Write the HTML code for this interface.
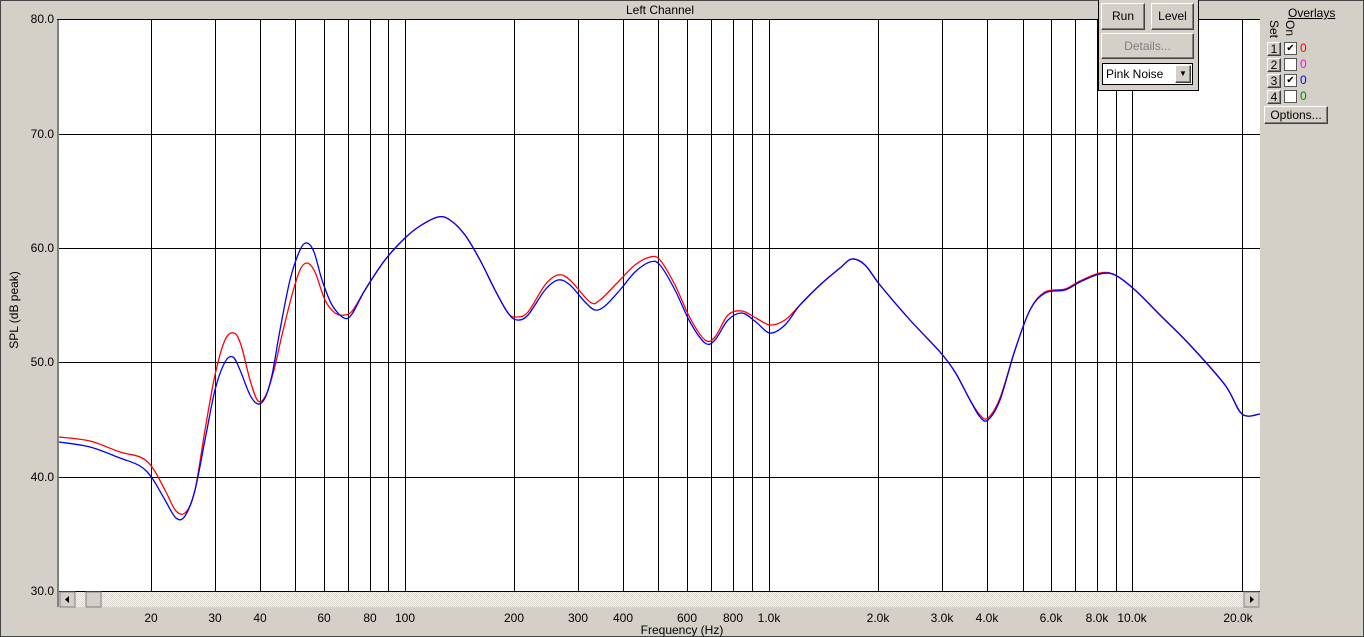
<!DOCTYPE html><html><head><style>
body{margin:0;width:1364px;height:637px;overflow:hidden;background:#d4d0c8;font-family:"Liberation Sans",Arial,sans-serif;font-size:12px;color:#000}
.btn{position:absolute;background:#d4d0c8;border:1px solid;border-color:#fff #404040 #404040 #fff;box-shadow:inset -1px -1px 0 #808080;text-align:center;font-size:12px}
</style></head><body>
<div style="position:absolute;left:0;top:0;width:1362px;height:635px;border:1px solid #444"></div>
<svg width="1364" height="637" style="position:absolute;left:0;top:0" font-family="Liberation Sans, Arial, sans-serif" font-size="12">
<rect x="59" y="19" width="1201" height="572" fill="#fff"/>
<line x1="58" y1="19" x2="58" y2="607" stroke="#808080" stroke-width="2"/>
<line x1="57" y1="19.5" x2="1260" y2="19.5" stroke="#000"/>
<g stroke="#000" stroke-width="1">
<line x1="59" y1="134.5" x2="1260" y2="134.5"/><line x1="59" y1="248.5" x2="1260" y2="248.5"/><line x1="59" y1="362.5" x2="1260" y2="362.5"/><line x1="59" y1="477.5" x2="1260" y2="477.5"/>
<line x1="151.5" y1="19" x2="151.5" y2="591"/><line x1="215.5" y1="19" x2="215.5" y2="591"/><line x1="260.5" y1="19" x2="260.5" y2="591"/><line x1="295.5" y1="19" x2="295.5" y2="591"/><line x1="324.5" y1="19" x2="324.5" y2="591"/><line x1="348.5" y1="19" x2="348.5" y2="591"/><line x1="370.5" y1="19" x2="370.5" y2="591"/><line x1="388.5" y1="19" x2="388.5" y2="591"/><line x1="405.5" y1="19" x2="405.5" y2="591"/>
<line x1="514.5" y1="19" x2="514.5" y2="591"/><line x1="578.5" y1="19" x2="578.5" y2="591"/><line x1="623.5" y1="19" x2="623.5" y2="591"/><line x1="658.5" y1="19" x2="658.5" y2="591"/><line x1="687.5" y1="19" x2="687.5" y2="591"/><line x1="711.5" y1="19" x2="711.5" y2="591"/><line x1="733.5" y1="19" x2="733.5" y2="591"/><line x1="752.5" y1="19" x2="752.5" y2="591"/><line x1="769.5" y1="19" x2="769.5" y2="591"/>
<line x1="878.5" y1="19" x2="878.5" y2="591"/><line x1="942.5" y1="19" x2="942.5" y2="591"/><line x1="987.5" y1="19" x2="987.5" y2="591"/><line x1="1023.5" y1="19" x2="1023.5" y2="591"/><line x1="1051.5" y1="19" x2="1051.5" y2="591"/><line x1="1075.5" y1="19" x2="1075.5" y2="591"/><line x1="1097.5" y1="19" x2="1097.5" y2="591"/><line x1="1116.5" y1="19" x2="1116.5" y2="591"/><line x1="1132.5" y1="19" x2="1132.5" y2="591"/><line x1="1242.5" y1="19" x2="1242.5" y2="591"/>
</g>
<polyline class="c" fill="none" stroke="#f00" stroke-width="1.3" stroke-linejoin="round" points="59,437 90,441 120,452 140,457 152,467 165,490 176,511 186,512 195,490 205,430 215,375 225,340 234,333 241,345 250,380 258,401 266,395 274,370 282,335 292,295 300,270 307,263 315,272 325,300 335,313 345,315 353,310 365,290 385,260 405,238 420,226 438,217 450,220 465,235 480,260 495,290 508,313 517,317 528,312 545,285 558,275 570,280 590,302 600,300 620,280 635,265 650,257 660,260 675,285 690,318 705,340 715,337 728,315 742,311 756,318 770,325 785,320 800,305 820,285 840,268 852,259 865,265 880,285 910,320 940,352 955,372 970,400 980,415 988,418 1000,398 1015,350 1030,310 1045,292 1065,289 1080,281 1100,273 1115,275 1135,290 1160,315 1190,345 1225,385 1242,414 1260,414"/>
<polyline class="c" fill="none" stroke="#00f" stroke-width="1.3" stroke-linejoin="round" points="59,442 90,447 120,458 140,466 152,478 165,500 176,518 185,516 195,490 205,440 215,390 225,362 233,357 240,370 250,395 258,404 265,398 272,375 280,330 290,280 300,250 307,243 314,252 322,280 332,305 344,318 352,314 365,290 385,260 405,238 420,226 438,217 450,220 465,235 480,260 495,290 508,313 517,320 528,315 545,290 558,280 570,285 585,302 595,310 605,306 620,290 635,272 650,262 660,265 675,290 690,322 705,343 715,340 728,320 742,313 756,322 770,333 785,325 800,305 820,285 840,268 852,259 865,265 880,285 910,320 940,352 955,372 970,400 980,417 988,420 1000,400 1015,350 1030,310 1045,293 1065,290 1080,282 1100,274 1115,275 1135,290 1160,315 1190,345 1225,385 1242,414 1260,414"/>
<g text-anchor="end" fill="#000"><text x="54" y="23">80.0</text><text x="54" y="138">70.0</text><text x="54" y="252">60.0</text><text x="54" y="366">50.0</text><text x="54" y="481">40.0</text><text x="54" y="595">30.0</text></g>
<text x="18" y="310" transform="rotate(-90 18 310)" text-anchor="middle">SPL (dB peak)</text>
<text x="660" y="14" text-anchor="middle">Left Channel</text>
<g text-anchor="middle"><text x="151" y="622">20</text><text x="215" y="622">30</text><text x="260" y="622">40</text><text x="324" y="622">60</text><text x="370" y="622">80</text><text x="405" y="622">100</text><text x="514" y="622">200</text><text x="578" y="622">300</text><text x="623" y="622">400</text><text x="687" y="622">600</text><text x="733" y="622">800</text><text x="769" y="622">1.0k</text><text x="878" y="622">2.0k</text><text x="942" y="622">3.0k</text><text x="987" y="622">4.0k</text><text x="1051" y="622">6.0k</text><text x="1097" y="622">8.0k</text><text x="1132" y="622">10.0k</text><text x="1238" y="622">20.0k</text><text x="682" y="634">Frequency (Hz)</text></g>
<defs><pattern id="p" width="2" height="2" patternUnits="userSpaceOnUse"><rect width="2" height="2" fill="#fff"/><rect width="1" height="1" fill="#d4d0c8"/><rect x="1" y="1" width="1" height="1" fill="#d4d0c8"/></pattern></defs>
<rect x="59" y="591" width="1201" height="16" fill="url(#p)"/>
<line x1="59" y1="591.5" x2="1260" y2="591.5" stroke="#000"/>
<rect x="60" y="592" width="15" height="15" fill="#d4d0c8" stroke="#808080"/><path d="M69 596v7l-4-3.5z" fill="#000"/>
<rect x="86" y="592" width="15" height="15" fill="#d4d0c8" stroke="#808080"/>
<rect x="1244" y="592" width="15" height="15" fill="#d4d0c8" stroke="#808080"/><path d="M1250 596v7l4-3.5z" fill="#000"/>
</svg>
<script>
document.querySelectorAll('polyline.c').forEach(function(pl){
var p=pl.getAttribute('points').trim().split(/\s+/).map(function(s){return s.split(',').map(Number);});
var d='M'+p[0][0]+' '+p[0][1];
for(var i=0;i<p.length-1;i++){var a=p[Math.max(0,i-1)],b=p[i],c=p[i+1],e=p[Math.min(p.length-1,i+2)];
var t=6;d+=' C'+(b[0]+(c[0]-a[0])/t)+' '+(b[1]+(c[1]-a[1])/t)+' '+(c[0]-(e[0]-b[0])/t)+' '+(c[1]-(e[1]-b[1])/t)+' '+c[0]+' '+c[1];}
var path=document.createElementNS('http://www.w3.org/2000/svg','path');
path.setAttribute('d',d);path.setAttribute('fill','none');path.setAttribute('stroke',pl.getAttribute('stroke'));path.setAttribute('stroke-width','1.3');
pl.parentNode.replaceChild(path,pl);});
</script>
<div style="position:absolute;left:1098px;top:0;width:99px;height:90px;background:#d4d0c8;border:1px solid #000;border-top:none"></div>
<div class="btn" style="left:1101px;top:3px;width:42px;height:25px;line-height:25px">Run</div>
<div class="btn" style="left:1151px;top:3px;width:41px;height:25px;line-height:25px">Level</div>
<div class="btn" style="left:1101px;top:33px;width:91px;height:24px;line-height:24px;color:#808080">Details...</div>
<div style="position:absolute;left:1102px;top:63px;background:#fff;border:1px solid #000;line-height:20px;padding-left:3px;box-sizing:border-box;width:91px;height:22px">Pink Noise</div>
<div class="btn" style="left:1175px;top:65px;width:14px;height:16px;font-size:8px;line-height:16px">▼</div>
<div style="position:absolute;left:1288px;top:6px;text-decoration:underline">Overlays</div>
<div style="position:absolute;top:20px;transform:rotate(90deg);transform-origin:left top;left:1281px;font-size:12px">Set</div>
<div style="position:absolute;top:20px;transform:rotate(90deg);transform-origin:left top;left:1297px;font-size:12px">On</div>
<div class="btn" style="left:1267px;top:42px;width:12px;height:12px;line-height:12px">1</div>
<div class="btn" style="left:1267px;top:58px;width:12px;height:12px;line-height:12px">2</div>
<div class="btn" style="left:1267px;top:74px;width:12px;height:12px;line-height:12px">3</div>
<div class="btn" style="left:1267px;top:90px;width:12px;height:12px;line-height:12px">4</div>
<div style="position:absolute;left:1284px;top:42px;width:11px;height:11px;background:#fff;border:1px solid #555;font-size:10px;line-height:11px;text-align:center">✔</div>
<div style="position:absolute;left:1284px;top:58px;width:11px;height:11px;background:#fff;border:1px solid #555"></div>
<div style="position:absolute;left:1284px;top:74px;width:11px;height:11px;background:#fff;border:1px solid #555;font-size:10px;line-height:11px;text-align:center">✔</div>
<div style="position:absolute;left:1284px;top:90px;width:11px;height:11px;background:#fff;border:1px solid #555"></div>
<div style="position:absolute;left:1300px;top:41px;color:#f00">0</div>
<div style="position:absolute;left:1300px;top:57px;color:#f0f">0</div>
<div style="position:absolute;left:1300px;top:73px;color:#00f">0</div>
<div style="position:absolute;left:1300px;top:89px;color:#080">0</div>
<div class="btn" style="left:1264px;top:106px;width:62px;height:16px;line-height:16px">Options...</div>
</body></html>
